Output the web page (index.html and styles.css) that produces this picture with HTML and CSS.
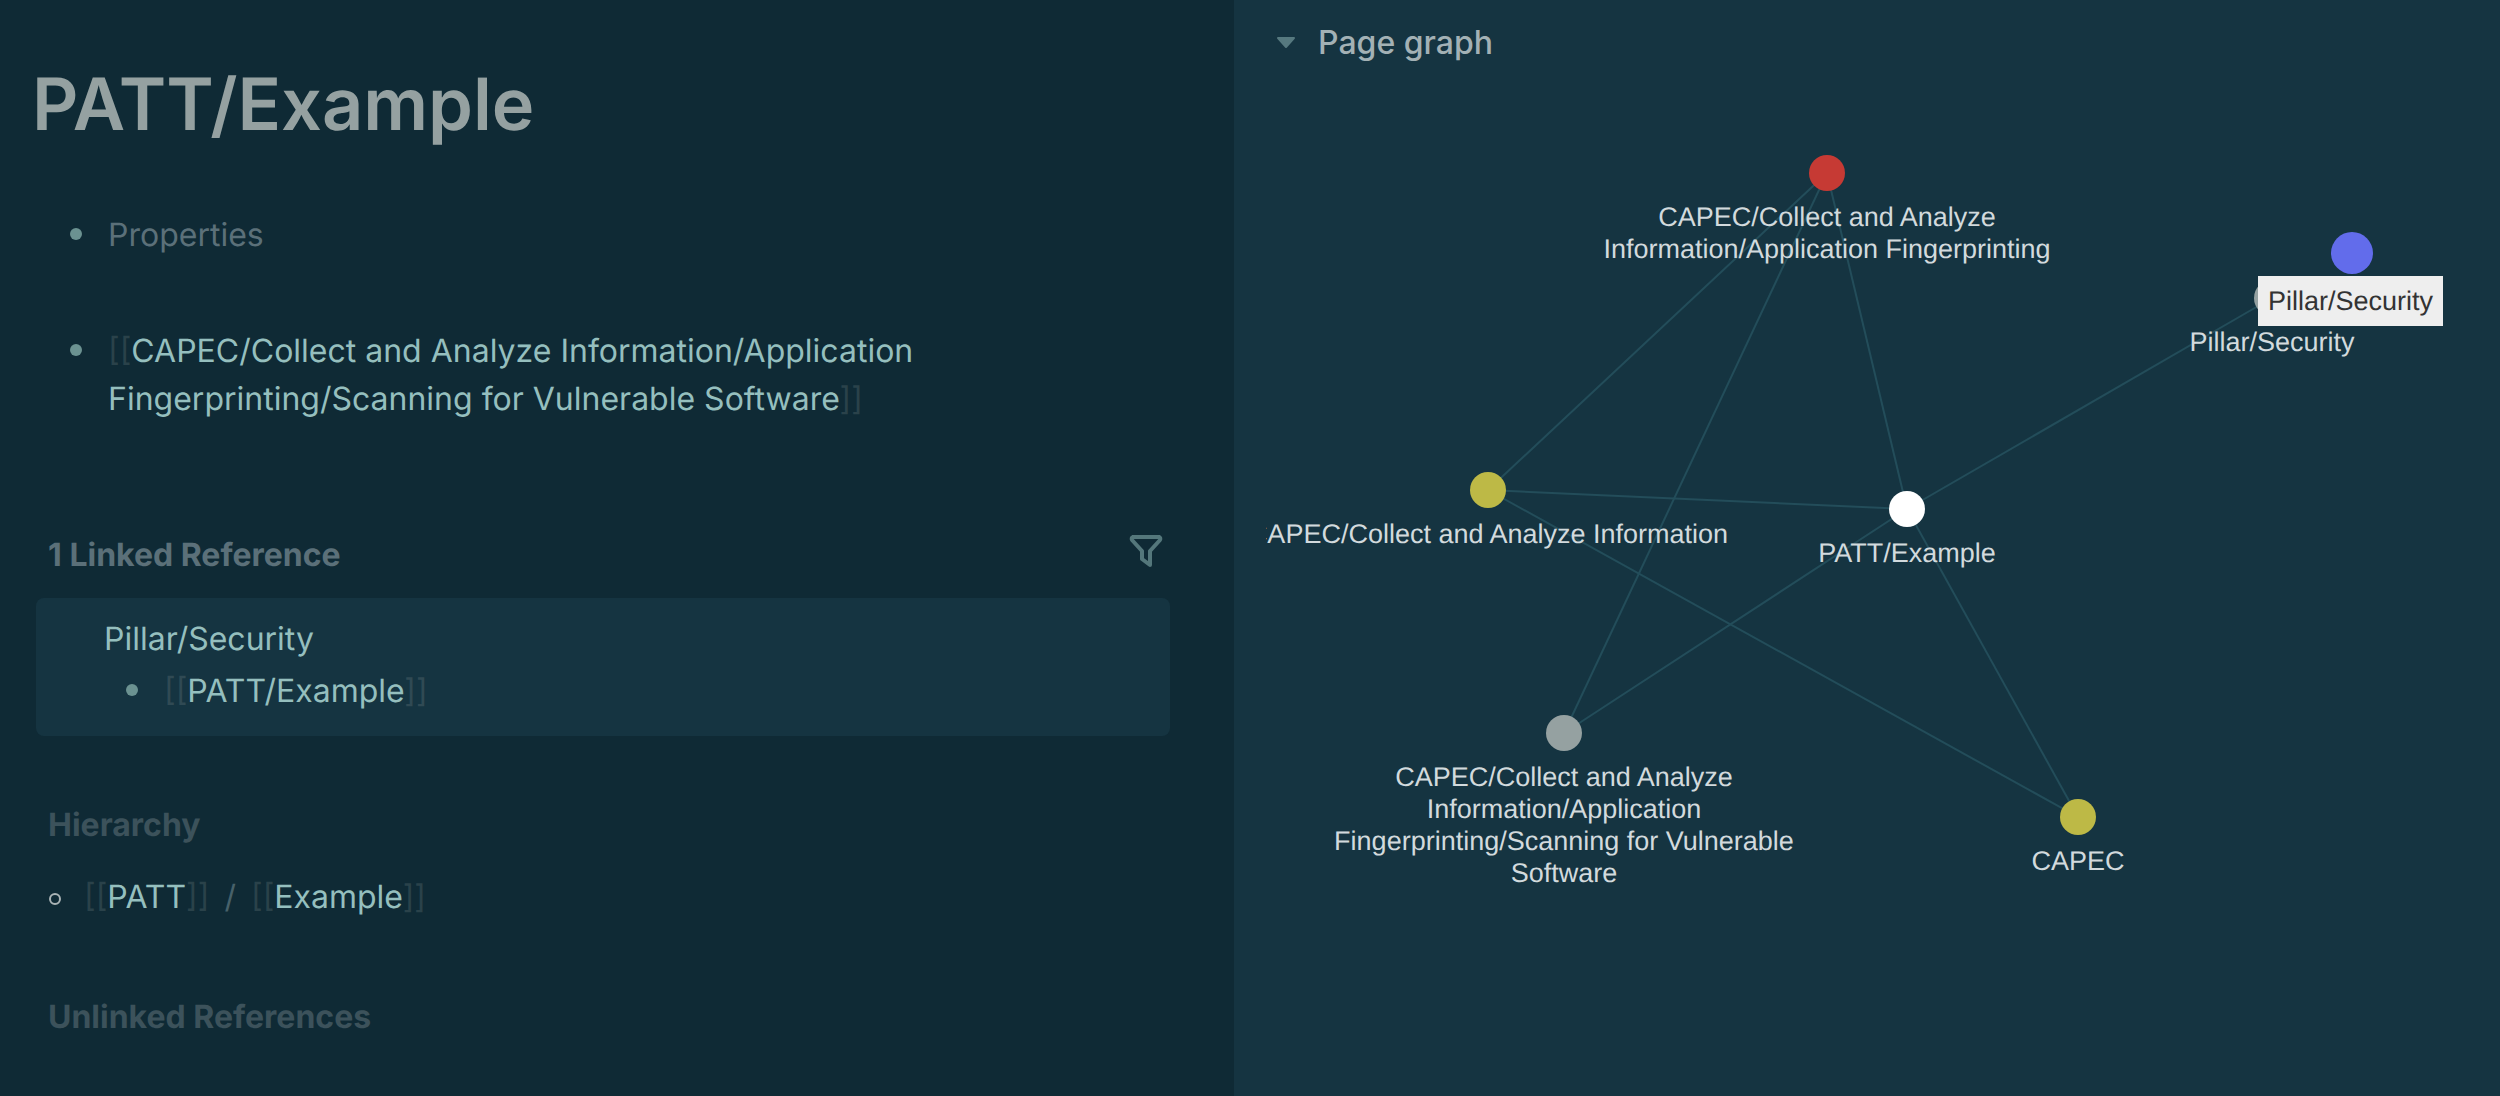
FILE: index.html
```
<!DOCTYPE html>
<html lang="en">

<head>
  <meta charset="UTF-8">
  <meta name="viewport" content="width=device-width, initial-scale=1.0">
  <title>PATT/Example</title>
  <link rel="stylesheet" href="styles.css">
</head>

<body>
  <div class="app">
    <main class="page">
      <h1 class="page-title">PATT/Example</h1>

      <ul class="blocks">
        <li class="block">
          <span class="bullet"></span>
          <span class="block-text muted">Properties</span>
        </li>
        <li class="block">
          <span class="bullet"></span>
          <span class="block-text"><span class="bracket">[[</span><a href="#" class="page-ref">CAPEC/Collect and Analyze Information/Application Fingerprinting/Scanning for Vulnerable Software</a><span class="bracket">]]</span></span>
        </li>
      </ul>

      <section class="references">
        <div class="references-header">
          <h2 class="section-title linked">1 Linked Reference</h2>
          <button type="button" class="filter-button" aria-label="Filter">
            <svg class="filter-icon" viewBox="0 0 24 24">
              <path d="M5.5 5h13a1 1 0 0 1 .5 1.5l-5 5.5v7l-4-3v-4l-5-5.5a1 1 0 0 1 .5-1.5" />
            </svg>
          </button>
        </div>
        <div class="reference-card">
          <a href="#" class="page-ref">Pillar/Security</a>
          <div class="block">
            <span class="bullet"></span>
            <span class="block-text"><span class="bracket">[[</span><a href="#" class="page-ref">PATT/Example</a><span class="bracket">]]</span></span>
          </div>
        </div>
      </section>

      <section class="hierarchy">
        <h2 class="section-title">Hierarchy</h2>
        <ul class="hierarchy-list">
          <li class="hierarchy-item">
            <span class="ring"></span>
            <span><span class="bracket">[[</span><a href="#" class="page-ref">PATT</a><span class="bracket">]]</span></span>
            <span class="slash">/</span>
            <span><span class="bracket">[[</span><a href="#" class="page-ref">Example</a><span class="bracket">]]</span></span>
          </li>
        </ul>
      </section>

      <section class="unlinked">
        <h2 class="section-title">Unlinked References</h2>
      </section>
    </main>

    <aside class="sidebar">
      <button type="button" class="graph-toggle" aria-expanded="true">
        <svg class="caret" viewBox="0 0 20 12">
          <path d="M2 1h16L10 10z" />
        </svg>
        Page graph
      </button>

      <div class="graph">
        <svg class="graph-canvas">
          <g class="edges">
            <line x1="561" y1="87" x2="222" y2="404" />
            <line x1="561" y1="87" x2="298" y2="647" />
            <line x1="561" y1="87" x2="641" y2="423" />
            <line x1="222" y1="404" x2="641" y2="423" />
            <line x1="222" y1="404" x2="812" y2="731" />
            <line x1="641" y1="423" x2="298" y2="647" />
            <line x1="641" y1="423" x2="1006" y2="212" />
            <line x1="641" y1="423" x2="812" y2="731" />
          </g>

          <g transform="translate(561 87)">
            <circle class="node red" r="18" />
            <text class="label" y="53">CAPEC/Collect and Analyze</text>
            <text class="label" y="85">Information/Application Fingerprinting</text>
          </g>
          <g transform="translate(222 404)">
            <circle class="node yellow" r="18" />
            <text class="label" y="53">CAPEC/Collect and Analyze Information</text>
          </g>
          <g transform="translate(641 423)">
            <circle class="node white" r="18" />
            <text class="label" y="53">PATT/Example</text>
          </g>
          <g transform="translate(298 647)">
            <circle class="node gray" r="18" />
            <text class="label" y="53">CAPEC/Collect and Analyze</text>
            <text class="label" y="85">Information/Application</text>
            <text class="label" y="117">Fingerprinting/Scanning for Vulnerable</text>
            <text class="label" y="149">Software</text>
          </g>
          <g transform="translate(812 731)">
            <circle class="node yellow" r="18" />
            <text class="label" y="53">CAPEC</text>
          </g>
          <g transform="translate(1006 212)">
            <circle class="node gray" r="18" />
            <text class="label" y="53">Pillar/Security</text>
          </g>

          <!-- hovered node -->
          <circle class="node blue" cx="1086" cy="167" r="21" />
        </svg>
        <div class="tooltip">Pillar/Security</div>
      </div>
    </aside>
  </div>
</body>

</html>
```
FILE: styles.css
```
body {
  margin: 0;
  background-color: #0f2a35;
  color: #95a1a1;
  font-family: Inter, sans-serif;
  font-size: 32px;
  line-height: 48px;
  text-rendering: geometricPrecision;
}

h1,
h2,
ul {
  margin: 0;
  padding: 0;
}

ul {
  list-style: none;
}

button {
  padding: 0;
  border: none;
  background: none;
  font: inherit;
  cursor: pointer;
}

.app {
  display: flex;
  min-height: 100vh;
}

/* Left: page content */
.page {
  flex: 1;
  min-width: 0;
  box-sizing: border-box;
  padding: 61px 64px 40px 32px;
}

.page-title {
  font-size: 72px;
  line-height: 88px;
  font-weight: 600;
}

.blocks {
  display: flex;
  flex-direction: column;
  gap: 68px;
  max-width: 940px;
  margin-top: 62px;
  padding-left: 38px;
}

.block {
  display: flex;
  gap: 26px;
}

.bullet {
  flex: none;
  width: 12px;
  height: 12px;
  margin-top: 17px;
  border-radius: 50%;
  background-color: #6b9291;
}

.muted {
  color: #5b7079;
}

.page-ref {
  color: #95bfbe;
  text-decoration: none;
}

.page-ref:hover {
  color: #b5d6d5;
}

.bracket {
  color: #2a424a;
}

.references {
  margin: 108px 0 0 4px;
}

.references-header {
  display: flex;
  justify-content: space-between;
  align-items: flex-start;
  margin-bottom: 19px;
  padding-left: 12px;
}

.section-title {
  font-size: 32px;
  line-height: 48px;
  font-weight: 700;
  color: #3c525b;
}

.linked {
  color: #5b7079;
}

.filter-button {
  display: flex;
  align-items: center;
  height: 40px;
}

.filter-icon {
  flex: none;
  width: 48px;
  height: 48px;
  fill: none;
  stroke: #54777b;
  stroke-width: 2;
  stroke-linecap: round;
  stroke-linejoin: round;
}

.reference-card {
  display: flex;
  flex-direction: column;
  gap: 4px;
  padding: 17px 68px 21px;
  border-radius: 8px;
  background-color: #153441;
}

.reference-card .block {
  padding-left: 22px;
}

.reference-card .bracket {
  color: #304a54;
}

.hierarchy {
  margin-top: 65px;
  padding-left: 16px;
}

.hierarchy-list {
  margin-top: 24px;
}

.hierarchy-item {
  display: flex;
}

.ring {
  box-sizing: border-box;
  width: 12px;
  height: 12px;
  margin: 20px 23px 0 1px;
  border: 2px solid #a9b3b5;
  border-radius: 50%;
}

.slash {
  margin: 0 15px;
  color: #47616a;
}

.unlinked {
  margin-top: 72px;
  padding-left: 16px;
}

/* Right: page graph */
.sidebar {
  display: flex;
  flex-direction: column;
  width: 50.64%;
  box-sizing: border-box;
  padding: 19px 32px 0;
  background-color: #153441;
}

.graph-toggle {
  display: flex;
  align-items: center;
  gap: 22px;
  padding-left: 10px;
  color: #a3b1b5;
  font-weight: 500;
}

.caret {
  width: 20px;
  height: 12px;
  fill: #56797f;
  stroke: #56797f;
  stroke-width: 2;
  stroke-linejoin: round;
}

.graph {
  position: relative;
  flex: 1;
  display: flex;
  margin-top: 19px;
  font-family: "Liberation Sans", Arial, sans-serif;
  font-size: 27px;
  line-height: 32px;
}

.graph-canvas {
  width: 100%;
  min-height: 900px;
  overflow: hidden;
}

.edges line {
  stroke: #234d5a;
  stroke-width: 2;
}

.label {
  fill: #d2dadd;
  text-anchor: middle;
}

.red {
  fill: #c63a34;
}

.yellow {
  fill: #bdb946;
}

.white {
  fill: #ffffff;
}

.gray {
  fill: #95a1a1;
}

.blue {
  fill: #626ceb;
}

.tooltip {
  position: absolute;
  left: 992px;
  top: 190px;
  padding: 9px 10px;
  background-color: #eeeeee;
  color: #333333;
  white-space: nowrap;
}
```
